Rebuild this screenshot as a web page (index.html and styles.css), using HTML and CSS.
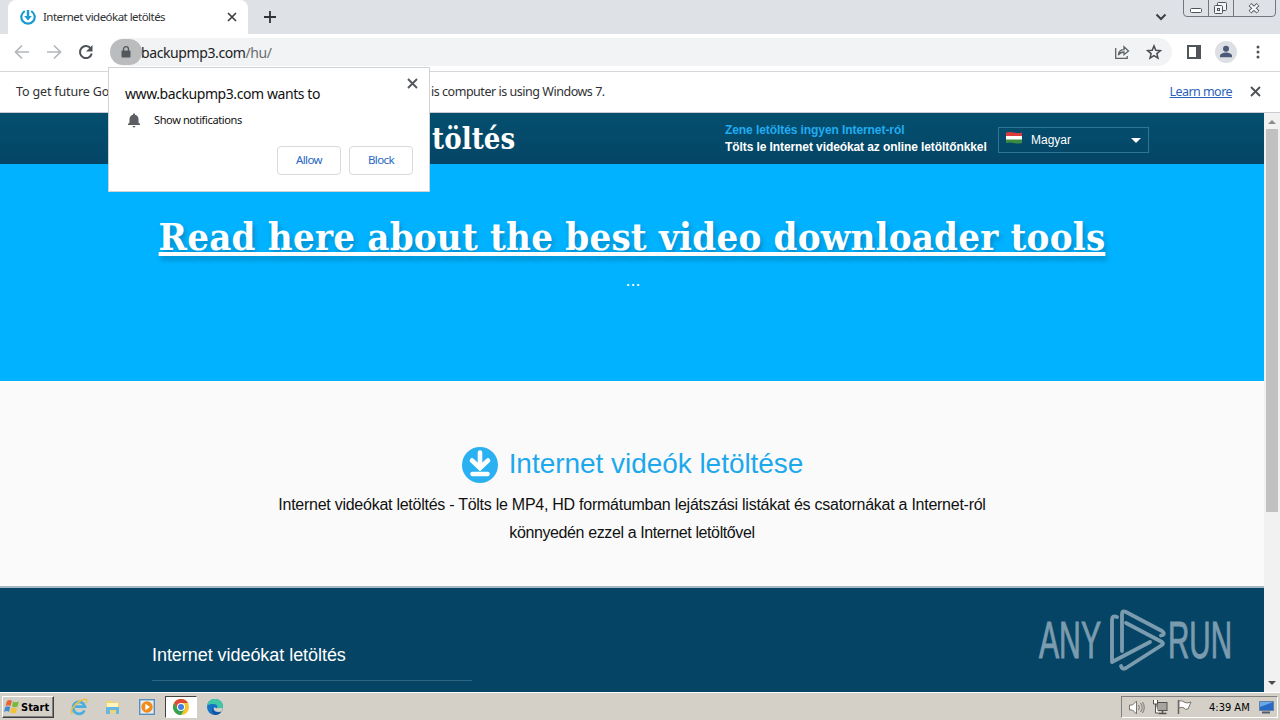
FILE: index.html
```html
<!DOCTYPE html>
<html lang="hu">
<head>
    <meta charset="UTF-8">
    <title>Internet videókat letöltés</title>
    <link rel="stylesheet" href="styles.css">
</head>
<body>
    <div class="tabstrip">
        <div class="tab">
            <svg class="favicon" width="16" height="16" viewBox="0 0 16 16" fill="none" stroke="#189bd0">
                <path d="M4.8 2.1A6.7 6.7 0 1 0 11.2 2.1" stroke-width="2.2"/>
                <path d="M8 1v8" stroke-width="2.4"/>
                <path d="M4.2 7h7.6L8 11.5z" fill="#189bd0" stroke="none"/>
            </svg>
            <span class="tab-title">Internet videókat letöltés</span>
            <svg class="tab-close" width="10" height="10" viewBox="0 0 10 10" stroke="#3c4043" stroke-width="1.7"><path d="M1 1l8 8M9 1L1 9"/></svg>
        </div>
        <svg class="new-tab" width="12" height="12" viewBox="0 0 12 12" stroke="#2f3338" stroke-width="1.8"><path d="M6 0v12M0 6h12"/></svg>
        <svg class="tab-search" width="12" height="8" viewBox="0 0 12 8" fill="none" stroke="#3c4043" stroke-width="2"><path d="M1.5 1.5L6 6l4.5-4.5"/></svg>
        <svg class="window-controls" width="94" height="18" viewBox="0 0 94 18" fill="none" stroke="#73777d">
            <path d="M.5 0v13q0 3.500 3.500 3.500h85q3.500 0 3.500-3.500V0M25.500 0v16M50.500 0v16"/>
            <rect x="7.500" y="8.500" width="11" height="4" rx="1" fill="#fff" stroke="#50545a"/>
            <g fill="#f4f5f7" stroke="#50545a"><rect x="34.500" y="2.500" width="9" height="8" rx="1"/><rect x="31.500" y="5.500" width="8" height="8" rx="1"/><rect x="34.500" y="8.500" width="2" height="2"/></g>
            <path d="M67 4.500l8 7.500M75 4.500L67 12" stroke="#50545a" stroke-width="4"/>
            <path d="M67.400 4.900l7.200 6.700M74.600 4.900l-7.200 6.700" stroke="#f6f6f8" stroke-width="2.200"/>
        </svg>
    </div>

    <div class="toolbar">
        <svg class="nav-icon" width="16" height="16" viewBox="0 0 16 16" fill="none" stroke="#b4b7ba" stroke-width="1.700"><path d="M15 8H2M8 1.500L1.500 8L8 14.500"/></svg>
        <svg class="nav-icon" width="16" height="16" viewBox="0 0 16 16" fill="none" stroke="#b4b7ba" stroke-width="1.700"><path d="M1 8h13M8 1.500L14.500 8L8 14.500"/></svg>
        <svg class="nav-icon" width="16" height="16" viewBox="0 0 16 16"><path d="M13 4.800A6 6 0 1 0 13.800 9.500" fill="none" stroke="#4f5357" stroke-width="2"/><path d="M14.500 1v6.500H8z" fill="#4f5357"/></svg>
        <div class="omnibox">
            <span class="site-chip">
                <svg width="10" height="12" viewBox="0 0 10 12"><path d="M2.500 5V3.200a2.500 2.500 0 0 1 5 0V5" fill="none" stroke="#55585b" stroke-width="1.300"/><rect x=".5" y="4.500" width="9" height="7" rx="1" fill="#55585b"/></svg>
            </span>
            <span class="url">backupmp3.com<span class="url-path">/hu/</span></span>
            <svg class="share" width="16" height="16" viewBox="0 0 16 16" fill="none" stroke="#5f6368" stroke-width="1.300"><path d="M1.700 4v10.300h11.500V12"/><path d="M4.300 11C4.800 7.500 7 5.700 10 5.700V2.800L14.500 7L10 10.700V8C7.500 8 5.800 9 4.300 11z"/></svg>
            <svg class="star" width="16" height="16" viewBox="0 0 16 16" fill="none" stroke="#4a4e52" stroke-width="1.500"><path d="M8 1.900l1.800 4.300 4.600.4-3.500 3 1.100 4.500L8 11.700l-4 2.400 1.100-4.500-3.500-3 4.600-.4z"/></svg>
        </div>
        <svg class="side-panel" width="14" height="14" viewBox="0 0 14 14"><rect x="1" y="1" width="12" height="12" fill="none" stroke="#505357" stroke-width="2"/><rect x="9" y="1" width="4" height="12" fill="#505357"/></svg>
        <svg class="avatar" width="22" height="22" viewBox="0 0 22 22"><circle cx="11" cy="11" r="11" fill="#dce0e5"/><g fill="#4a5a78"><circle cx="11" cy="7.700" r="3"/><path d="M5 16.300v-1.500c0-2 3.500-3.300 6-3.300s6 1.300 6 3.300v1.500z"/></g></svg>
        <svg class="menu-dots" width="4" height="14" viewBox="0 0 4 14" fill="#4f5357"><circle cx="2" cy="2" r="1.500"/><circle cx="2" cy="7" r="1.500"/><circle cx="2" cy="12" r="1.500"/></svg>
    </div>

    <div class="infobar">
        <span class="infobar-start">To get future Go</span>
        <span class="infobar-end">is computer is using Windows 7.</span>
        <a class="learn-more">Learn more</a>
        <svg width="11" height="11" viewBox="0 0 11 11" stroke="#4f5357" stroke-width="1.900"><path d="M1 1l9 9M10 1l-9 9"/></svg>
    </div>

    <div class="viewport">
        <div class="page">
            <header class="site-header">
                <div class="site-logo">töltés</div>
                <div class="tagline">
                    <div class="tagline-top">Zene letöltés ingyen Internet-ról</div>
                    <div class="tagline-bottom">Tölts le Internet videókat az online letöltőnkkel</div>
                </div>
                <div class="language">
                    <svg width="16" height="14" viewBox="0 0 16 14"><path d="M0 1.500q4-1 8 0t8 0V5H0z" fill="#dc3b3e"/><path d="M0 5h16v4H0z" fill="#fff"/><path d="M0 8.500h16v3.500q-4 1-8 0t-8 0z" fill="#3c8c40"/></svg>
                    <span>Magyar</span>
                    <svg width="10" height="5" viewBox="0 0 10 5"><path d="M0 0h10L5 5z" fill="#fff"/></svg>
                </div>
            </header>
            <section class="hero">
                <a class="hero-link">Read here about the best video downloader tools</a>
                <div class="hero-dots">...</div>
            </section>
            <section class="intro">
                <h1>
                    <svg width="36" height="36" viewBox="0 0 36 36"><circle cx="18" cy="18" r="18" fill="#29b1f1"/><path d="M18 5.500v15M10 13.500l8 7.500 8-7.500M10.500 27h15" fill="none" stroke="#fff" stroke-width="4.600" stroke-linecap="round"/></svg>
                    <span>Internet videók letöltése</span>
                </h1>
                <p class="intro-line first">Internet videókat letöltés - Tölts le MP4, HD formátumban lejátszási listákat és csatornákat a Internet-ról</p>
                <p class="intro-line second">könnyedén ezzel a Internet letöltővel</p>
            </section>
            <footer class="site-footer">
                <div class="footer-title">Internet videókat letöltés</div>
                <svg class="watermark" width="204" height="64" viewBox="0 0 204 64">
                    <g font-family="'Liberation Sans Narrow', 'Liberation Sans', sans-serif" font-size="51" fill="#7b9bae" stroke="#7b9bae">
                        <text x="1" y="49" textLength="62" lengthAdjust="spacingAndGlyphs">ANY</text>
                        <text x="130" y="49" textLength="64" lengthAdjust="spacingAndGlyphs">RUN</text>
                    </g>
                    <g fill="none" stroke="#7b9bae" stroke-width="3.800" stroke-linejoin="round" stroke-linecap="round">
                        <path d="M79 8q-5-2-5 3v42l38-20"/>
                        <path d="M84 42V5q0-4 4-2l36 19q3 2 1 4l-2 .5"/>
                        <path d="M88 14l36 19q2 1.500 0 3L88 59q-4 2-5-2"/>
                    </g>
                </svg>
            </footer>
        </div>
        <div class="scrollbar">
            <svg width="8" height="4" viewBox="0 0 8 4"><path d="M0 4l4-4 4 4z" fill="#8c8c8c"/></svg>
            <div class="scroll-thumb"></div>
            <svg class="scroll-down" width="8" height="4" viewBox="0 0 8 4"><path d="M0 0h8L4 4z" fill="#4b4b4b"/></svg>
        </div>
    </div>

    <div class="taskbar">
        <div class="start">
            <svg width="16" height="16" viewBox="0 0 16 16"><path d="M3 2q3-2 5 0L6.500 7q-2-1.500-5 0z" fill="#e86432"/><path d="M9 2.500q2.500 1.500 6 0L13.500 7.500q-3 1.500-5.500 0z" fill="#79b83c"/><path d="M1.200 8q3-1.500 5 0L5 13q-2-2-5 0z" fill="#4589cf"/><path d="M7.500 8.500q3 1.500 5.700 0L12 13.500q-3 1.700-5.700 0z" fill="#f2c32e"/></svg>
            <span>Start</span>
        </div>
        <div class="quick-launch">
            <div class="task">
                <svg width="18" height="18" viewBox="0 0 18 18" fill="none"><path d="M14.500 12.500A6 6 0 1 1 15 8.700H5" stroke="#49addf" stroke-width="2.800"/><path d="M2.500 16C-1 14 4 6 10 3s8-2 6 2" stroke="#ebbf42" stroke-width="1.500"/></svg>
            </div>
            <div class="task">
                <svg width="18" height="18" viewBox="0 0 18 18"><path d="M2 3h5l1 1h7v11H2z" fill="#f2d276"/><path d="M3 5h11v4H3z" fill="#fff3bf"/><path d="M2 16V9h13v7h-3v-4H6v4z" fill="#68b7df"/></svg>
            </div>
            <div class="task">
                <svg width="16" height="16" viewBox="0 0 16 16"><rect x=".7" y=".7" width="14.600" height="14.600" fill="#e6eef4" stroke="#5590c0" stroke-width="1.400"/><circle cx="8" cy="8" r="5.700" fill="#f28a19"/><path d="M6.300 4.800L11 8l-4.700 3.200z" fill="#fff"/></svg>
            </div>
            <div class="task active">
                <svg width="16" height="16" viewBox="0 0 16 16"><circle cx="8" cy="8" r="8" fill="#f3c52d"/><path d="M1.070 4A8 8 0 0 1 14.930 4H8L4.500 10z" fill="#df4937"/><path d="M1.070 4A8 8 0 0 0 8 16l3.500-6-7 0z" fill="#35a153"/><circle cx="8" cy="8" r="4" fill="#fff"/><circle cx="8" cy="8" r="3" fill="#4180de"/></svg>
            </div>
            <div class="task">
                <svg width="16" height="16" viewBox="0 0 16 16"><circle cx="8" cy="8" r="8" fill="#1673c5"/><path d="M0 7C1 1 6-.5 10 .3s7 5 5.800 8c-.8 2-4.800 2.500-6.300 1 2-2.300 0-4.300-3-4.300S1 5.500 0 7z" fill="#41c6a6"/><path d="M6 8q-1 5 6 5.500 2 0 2.500-.5Q12 16 8.500 16 3 14 6 8z" fill="#1154a0"/><path d="M9.500 9.300C8 8 7 8 6.700 10c.5 2.500 4 3.500 7.800 2.500L16 9z" fill="#d4d0c8"/></svg>
            </div>
        </div>
        <div class="tray">
            <svg class="speaker" width="17" height="15" viewBox="0 0 17 15" fill="none" stroke="#77736d"><path d="M1.500 5h3l4-4v13l-4-4h-3z" fill="#fff"/><path d="M10.500 5q2 2.500 0 5M12.500 3q3.500 4.500 0 9M14.500 2q3.500 5.500 0 11"/></svg>
            <svg class="network" width="17" height="16" viewBox="0 0 17 16"><rect x="5" y="3.500" width="10" height="8" fill="#a7a49f" stroke="#55524e"/><path d="M6.500 14.500h8M10.500 12v2" stroke="#55524e" stroke-width="1.500"/><path d="M1.500 1v4h4V1M3.500 5v9h3" fill="#fff" stroke="#55524e"/></svg>
            <svg class="flag" width="17" height="16" viewBox="0 0 17 16"><path d="M2.500 1v14" stroke="#66625d" stroke-width="1.500"/><path d="M3 2q3-1 5 1 3 2 7 0l-3 7q-3 1-4-1-2-1.500-5 0z" fill="#fff" stroke="#77736d"/></svg>
            <span class="clock">4:39 AM</span>
            <svg width="15" height="14" viewBox="0 0 15 14"><path d="M.5 1.500h14v9H.5z" fill="#276bc6" stroke="#65819f"/><path d="M1 2h13L1 7z" fill="#69a9e7"/><path d="M3 12.500h8" stroke="#4f5e70" stroke-width="2"/></svg>
        </div>
    </div>

    <div class="permission">
        <svg class="permission-close" width="11" height="11" viewBox="0 0 11 11" stroke="#55585c" stroke-width="1.900"><path d="M1 1l9 9M10 1l-9 9"/></svg>
        <div class="permission-title">www.backupmp3.com wants to</div>
        <div class="permission-row">
            <svg width="12" height="15" viewBox="0 0 12 15" fill="#5b5e62"><path d="M0 12v-1l1.500-1.500V6C1.500 3.700 3 2.200 5 1.800V1q1-1.500 2 0v.8c2 .4 3.500 1.900 3.500 4.200v3.500L12 11v1zM4.500 13h3q-1.500 3-3 0z"/></svg>
            <span>Show notifications</span>
        </div>
        <div class="permission-buttons">
            <div class="button">Allow</div>
            <div class="button">Block</div>
        </div>
    </div>
</body>
</html>
```
FILE: styles.css
```css
* {
    box-sizing: border-box;
}

body {
    margin: 0;
    width: 1280px;
    height: 720px;
    overflow: hidden;
    display: flex;
    flex-direction: column;
    position: relative;
    font-family: "Noto Sans", sans-serif;
    font-size: 12px;
    color: #303134;
    background: #fff;
    white-space: nowrap;
}

svg {
    display: block;
    flex: none;
}

/* browser chrome */
.tabstrip {
    height: 34px;
    flex: none;
    background: #dee1e6;
    display: flex;
    align-items: flex-start;
    padding-left: 8px;
}

.tab {
    width: 240px;
    height: 34px;
    background: #fff;
    border-radius: 8px 8px 0 0;
    display: flex;
    align-items: center;
    padding: 0 11px 0 12px;
}

.tab-title {
    margin-left: 7px;
    margin-top: -2px;
    font-size: 11.5px;
    letter-spacing: -0.53px;
}

.tab-close {
    margin-left: auto;
}

.new-tab {
    margin: 11px 0 0 16px;
}

.tab-search {
    margin: 13px 16px 0 auto;
}

.window-controls {
    margin-right: 3px;
}

.toolbar {
    height: 38px;
    flex: none;
    border-bottom: 1px solid #d5d7da;
    display: flex;
    align-items: center;
    padding: 0 20px 1px 14px;
}

.nav-icon {
    margin-right: 16px;
}

.omnibox {
    width: 1062px;
    height: 28px;
    border-radius: 14px;
    background: #f1f3f4;
    display: flex;
    align-items: center;
    padding-right: 10px;
}

.site-chip {
    width: 32px;
    height: 26px;
    border-radius: 13px;
    background: #babcbe;
    display: flex;
    align-items: center;
    justify-content: center;
}

.url {
    font-size: 14px;
    color: #202124;
    margin-left: -1px;
    letter-spacing: -0.4px;
}

.url-path {
    color: #6b6e72;
}

.share {
    margin-left: auto;
    margin-right: 16px;
}

.side-panel {
    margin-left: 15px;
}

.avatar {
    margin-left: 14px;
}

.menu-dots {
    margin-left: auto;
}

.infobar {
    height: 41px;
    flex: none;
    border-bottom: 1px solid #c9cdd1;
    display: flex;
    align-items: center;
    padding: 0 19px 2px 16px;
    font-size: 12.5px;
}

.infobar-start {
    width: 415px;
    letter-spacing: -0.15px;
}

.infobar-end {
    letter-spacing: -0.47px;
}

.learn-more {
    margin-left: auto;
    margin-right: 18px;
    color: #2a62b8;
    text-decoration: underline;
    letter-spacing: -0.55px;
}

/* web page */
.viewport {
    flex: 1;
    min-height: 0;
    display: flex;
}

.page {
    width: 1264px;
    display: flex;
    flex-direction: column;
    font-family: "Liberation Sans", Arial, sans-serif;
}

.site-header {
    height: 51px;
    flex: none;
    background: linear-gradient(#044f6e, #054566);
    display: flex;
    align-items: center;
    color: #fff;
}

.site-logo {
    width: 84px;
    margin-left: 432px;
    font: bold 29px "DejaVu Serif Condensed", "DejaVu Serif", serif;
    font-stretch: condensed;
    letter-spacing: 0.1px;
}

.tagline {
    width: 273px;
    margin-left: 209px;
    padding-top: 1px;
    font-size: 12px;
    font-weight: bold;
    line-height: 17px;
}

.tagline-top {
    color: #20acf2;
    letter-spacing: -0.08px;
}

.tagline-bottom {
    letter-spacing: -0.09px;
}

.language {
    width: 151px;
    height: 26px;
    margin-top: 3px;
    border: 1px solid #2d7694;
    display: flex;
    align-items: center;
    padding: 0 7px;
}

.language span {
    margin-left: 9px;
    margin-right: auto;
}

.language svg:first-child {
    margin-bottom: 4px;
}

.hero {
    height: 217px;
    flex: none;
    background: #00b2ff;
    color: #fff;
    display: flex;
    flex-direction: column;
    align-items: center;
    padding-top: 48px;
}

.hero-link {
    font: bold 38px/50px "DejaVu Serif Condensed", "DejaVu Serif", serif;
    font-stretch: condensed;
    letter-spacing: 0.23px;
    text-decoration: underline;
    text-decoration-thickness: 4px;
    text-underline-offset: 2px;
    text-decoration-skip-ink: none;
    text-shadow: 2px 4px 5px rgba(0, 0, 0, 0.22);
}

.hero-dots {
    font-size: 18px;
    line-height: 20px;
    margin-top: 8px;
    margin-left: 2px;
}

.intro {
    height: 207px;
    flex: none;
    background: #fafafa;
    border-bottom: 2px solid #a6b8c3;
    display: flex;
    flex-direction: column;
    align-items: center;
    padding-top: 65px;
    color: #111;
}

.intro h1 {
    margin: 0 0 7px 1px;
    display: flex;
    align-items: center;
    gap: 11px;
    height: 38px;
    color: #1ea8ec;
    font-size: 28px;
    font-weight: normal;
    letter-spacing: -0.04px;
}

.intro h1 span {
    margin-top: -2px;
}

.intro-line {
    margin: 0;
    font-size: 16px;
    line-height: 28px;
}

.intro-line.first {
    letter-spacing: -0.26px;
}

.intro-line.second {
    letter-spacing: -0.39px;
}

.site-footer {
    flex: 1;
    background: #054464;
    display: flex;
    justify-content: space-between;
    padding: 21px 22px 0 152px;
}

.footer-title {
    width: 320px;
    height: 72px;
    padding-top: 35px;
    border-bottom: 1px solid #2d6683;
    color: #fff;
    font-size: 18px;
    line-height: 22px;
    letter-spacing: -0.05px;
}

.scrollbar {
    width: 16px;
    background: #f1f1f1;
    display: flex;
    flex-direction: column;
    align-items: center;
    padding: 7px 0;
}

.scroll-thumb {
    width: 12px;
    height: 383px;
    margin-top: 5px;
    background: #c1c1c1;
}

.scroll-down {
    margin-top: auto;
}

/* windows taskbar */
.taskbar {
    height: 28px;
    flex: none;
    background: #d4d0c8;
    border-top: 1px solid #fff;
    display: flex;
    align-items: center;
    padding: 1px 2px 0;
}

.start {
    width: 52px;
    height: 22px;
    border: 1px solid;
    border-color: #fff #404040 #404040 #fff;
    box-shadow: inset -1px -1px 0 #808080;
    display: flex;
    align-items: center;
    padding-left: 1px;
    gap: 1px;
    color: #000;
    font: bold 11px "DejaVu Sans Condensed", "DejaVu Sans", sans-serif;
    font-stretch: condensed;
}

.quick-launch {
    display: flex;
    margin-left: 9px;
    gap: 2px;
}

.task {
    width: 32px;
    height: 22px;
    display: flex;
    align-items: center;
    justify-content: center;
}

.task.active {
    background: #fff;
    border: 1px solid;
    border-color: #404040 #fff #fff #404040;
}

.tray {
    width: 157px;
    height: 22px;
    margin-left: auto;
    border: 1px solid;
    border-color: #808080 #fff #fff #808080;
    display: flex;
    align-items: center;
    padding-left: 6px;
    color: #000;
}

.network {
    margin-left: 7px;
}

.flag {
    margin-left: 7px;
}

.clock {
    width: 43px;
    margin: 0 7px 0 16px;
    font: 11px "DejaVu Sans Condensed", "DejaVu Sans", sans-serif;
    font-stretch: condensed;
}

/* permission bubble over the page */
.permission {
    position: absolute;
    left: 108px;
    top: 67px;
    width: 322px;
    height: 125px;
    background: #fff;
    border: 1px solid #cfd3d6;
    padding: 16px;
    color: #111;
}

.permission-close {
    position: absolute;
    top: 10px;
    right: 11px;
}

.permission-title {
    font-size: 14px;
    line-height: 20px;
    letter-spacing: -0.42px;
}

.permission-row {
    display: flex;
    align-items: center;
    height: 18px;
    margin-top: 7px;
    padding-left: 3px;
    gap: 14px;
    font-size: 11px;
    letter-spacing: -0.38px;
}

.permission-row span {
    margin-top: -2px;
}

.permission-buttons {
    display: flex;
    justify-content: flex-end;
    gap: 8px;
    margin-top: 17px;
}

.button {
    width: 64px;
    height: 29px;
    border: 1px solid #d7dade;
    border-radius: 4px;
    color: #2467c4;
    font-size: 11.5px;
    line-height: 26px;
    text-align: center;
    letter-spacing: -0.6px;
}
```
